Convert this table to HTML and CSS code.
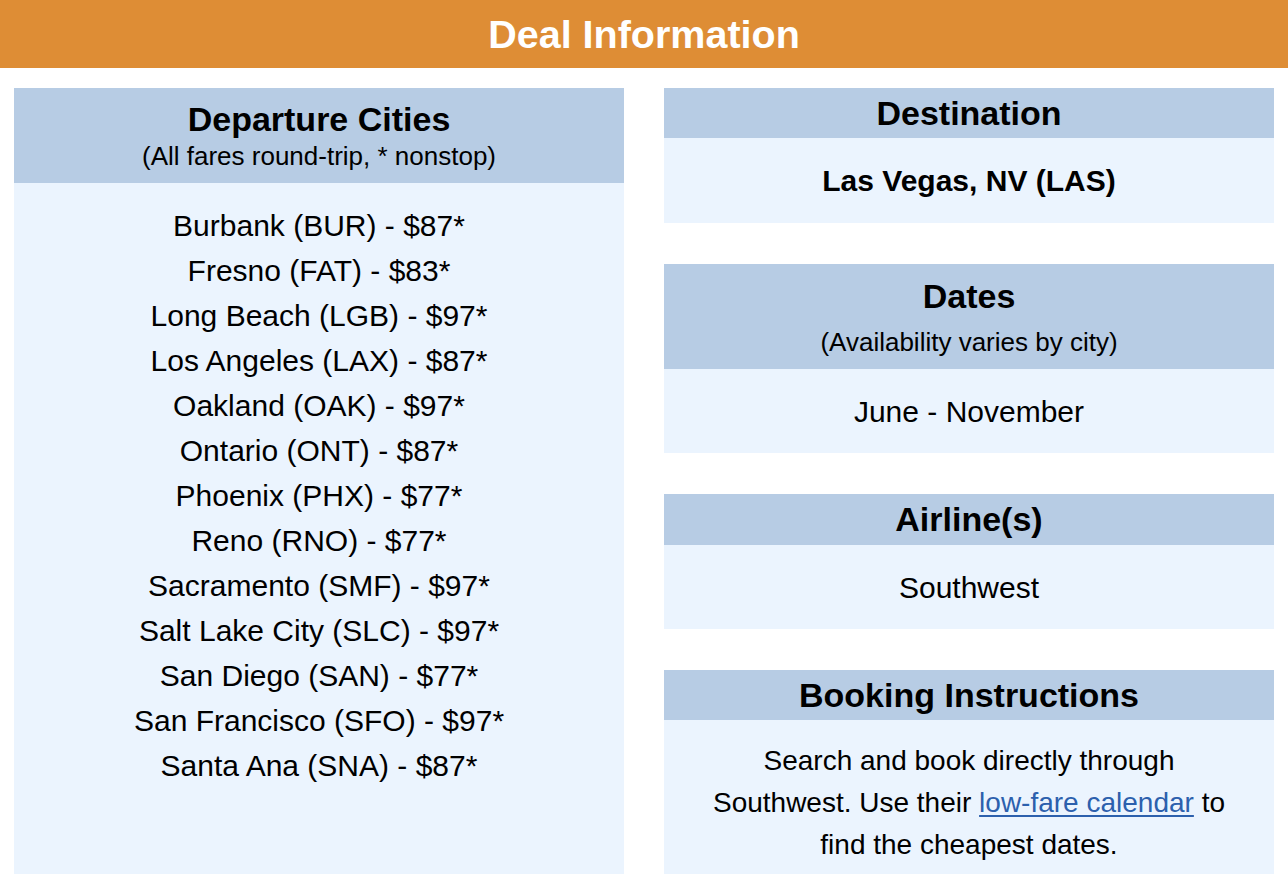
FILE: index.html
```html
<!DOCTYPE html>
<html lang="en">
<head>
<meta charset="utf-8">
<title>Deal Information</title>
<link rel="stylesheet" href="styles.css">
</head>
<body>
  <header class="banner">Deal Information</header>
  <main class="layout">
    <section class="panel panel-cities">
      <div class="panel-head head-cities">
        <h2 class="title title-tight">Departure Cities</h2>
        <p class="subtitle subtitle-cities">(All fares round-trip, * nonstop)</p>
      </div>
      <ul class="panel-body city-list">
        <li>Burbank (BUR) - $87*</li>
        <li>Fresno (FAT) - $83*</li>
        <li>Long Beach (LGB) - $97*</li>
        <li>Los Angeles (LAX) - $87*</li>
        <li>Oakland (OAK) - $97*</li>
        <li>Ontario (ONT) - $87*</li>
        <li>Phoenix (PHX) - $77*</li>
        <li>Reno (RNO) - $77*</li>
        <li>Sacramento (SMF) - $97*</li>
        <li>Salt Lake City (SLC) - $97*</li>
        <li>San Diego (SAN) - $77*</li>
        <li>San Francisco (SFO) - $97*</li>
        <li>Santa Ana (SNA) - $87*</li>
      </ul>
    </section>
    <div class="side">
      <section class="panel">
        <div class="panel-head"><h2 class="title">Destination</h2></div>
        <div class="panel-body"><p class="value value-strong">Las Vegas, NV (LAS)</p></div>
      </section>
      <section class="panel">
        <div class="panel-head head-dates">
          <h2 class="title title-dates">Dates</h2>
          <p class="subtitle subtitle-dates">(Availability varies by city)</p>
        </div>
        <div class="panel-body body-short"><p class="value">June - November</p></div>
      </section>
      <section class="panel">
        <div class="panel-head head-airline"><h2 class="title">Airline(s)</h2></div>
        <div class="panel-body body-short"><p class="value">Southwest</p></div>
      </section>
      <section class="panel">
        <div class="panel-head"><h2 class="title">Booking Instructions</h2></div>
        <div class="panel-body"><p class="value value-text">Search and book directly through<br>Southwest. Use their <a class="link" href="#">low-fare calendar</a> to<br>find the cheapest dates.</p></div>
      </section>
    </div>
  </main>
</body>
</html>
```

FILE: styles.css
```css
* {
  box-sizing: border-box;
}

html, body {
  margin: 0;
  padding: 0;
  background: #ffffff;
}

body {
  font-family: "Liberation Sans", Arial, Helvetica, sans-serif;
  color: #000000;
  overflow: hidden;
}

.banner {
  height: 68px;
  background: #de8d35;
  color: #ffffff;
  font-weight: 700;
  font-size: 39.5px;
  line-height: 68px;
  text-align: center;
}

.layout {
  display: flex;
  gap: 40px;
  padding: 20px 14px 0 14px;
}

.panel {
  display: flex;
  flex-direction: column;
}

.panel-cities {
  flex: 1 1 0;
}

.side {
  flex: 1 1 0;
  display: flex;
  flex-direction: column;
  gap: 41px;
}

.panel-head {
  background: #b7cce4;
  text-align: center;
  height: 50px;
}

.head-cities {
  height: 95px;
  padding-top: 14px;
}

.head-dates {
  height: 105px;
  padding-top: 9px;
}

.head-airline {
  height: 51px;
}

.title {
  margin: 0;
  font-size: 34px;
  font-weight: 700;
  line-height: 50px;
}

.title-tight {
  line-height: 34px;
}

.title-dates {
  line-height: 46px;
}

.subtitle {
  margin: 0;
  font-weight: 400;
  font-size: 26px;
}

.subtitle-cities {
  line-height: 40px;
}

.subtitle-dates {
  line-height: 46px;
}

.panel-body {
  background: #ebf4fe;
  text-align: center;
  padding: 20px 0;
}

.body-short {
  padding-bottom: 19px;
}

.city-list {
  list-style: none;
  margin: 0;
  flex: 1 1 auto;
  font-size: 30px;
  line-height: 45px;
}

.value {
  margin: 0;
  font-size: 30px;
  line-height: 45px;
}

.value-strong {
  font-weight: 700;
}

.value-text {
  font-size: 28px;
  line-height: 42px;
}

.link {
  color: #2c60ad;
  text-decoration: underline;
  text-underline-offset: 3px;
}
```
